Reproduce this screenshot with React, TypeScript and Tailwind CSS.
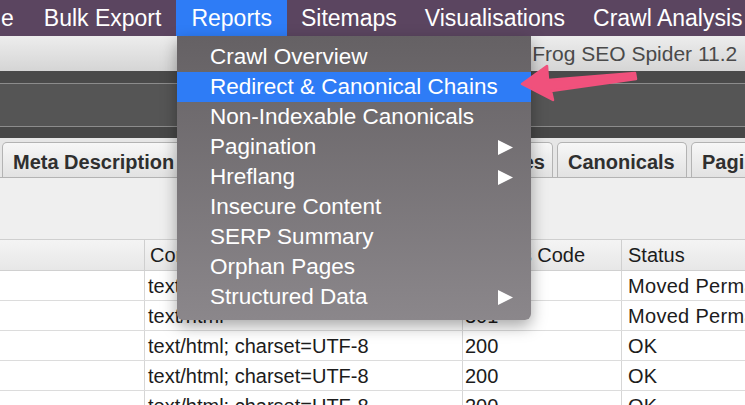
import React from 'react';

type Row = { type: string; code: string; status: string };

const rows: Row[] = [
  { type: 'text/html', code: '301', status: 'Moved Permanently' },
  { type: 'text/html', code: '301', status: 'Moved Permanently' },
  { type: 'text/html; charset=UTF-8', code: '200', status: 'OK' },
  { type: 'text/html; charset=UTF-8', code: '200', status: 'OK' },
  { type: 'text/html; charset=UTF-8', code: '200', status: 'OK' },
];

const reportItems = [
  { label: 'Crawl Overview' },
  { label: 'Redirect & Canonical Chains', active: true },
  { label: 'Non-Indexable Canonicals' },
  { label: 'Pagination', sub: true },
  { label: 'Hreflang', sub: true },
  { label: 'Insecure Content' },
  { label: 'SERP Summary' },
  { label: 'Orphan Pages' },
  { label: 'Structured Data', sub: true },
];

function SubArrow() {
  return (
    <svg width="15" height="15" viewBox="0 0 15 15" className="absolute right-[18px] top-[8px]">
      <polygon points="0,0 15,7.5 0,15" fill="#ffffff" />
    </svg>
  );
}

function ReportsMenu() {
  return (
    <div className="absolute left-[177px] top-[36px] w-[354px] h-[284px] pt-[6px] rounded-b-[6px] bg-gradient-to-b from-[#656164] to-[#8b878b] shadow-[0_6px_16px_rgba(0,0,0,0.35)] text-white text-[22.5px] z-10">
      {reportItems.map(item => (
        <div
          key={item.label}
          className={`relative h-[30px] pl-[33px] flex items-center ${item.active ? 'bg-[#2e7cf6]' : ''}`}
        >
          {item.label}
          {item.sub && <SubArrow />}
        </div>
      ))}
    </div>
  );
}

// callout arrow pointing at the highlighted report
function PinkArrow() {
  return (
    <svg width="135" height="55" viewBox="0 0 135 55" className="absolute left-[510px] top-[55px] z-20">
      <polygon
        points="12,29 37,11 38,25 125,18 126,24 41,36 43,45"
        fill="#f0517c"
        stroke="#f0517c"
        strokeWidth="2.5"
        strokeLinejoin="round"
      />
    </svg>
  );
}

function Tab({ label, w }: { label: string; w: string }) {
  return (
    <div
      className={`${w} h-[35px] shrink-0 px-[10px] pt-[3px] flex items-center border border-b-0 border-[#b3b3b3] rounded-t-[5px] bg-gradient-to-b from-[#f7f7f7] to-[#e2e2e2] font-bold text-[20px] text-[#2f2f2f] whitespace-nowrap overflow-hidden`}
    >
      {label}
    </div>
  );
}

export default function App() {
  return (
    <div className="relative w-[745px] h-[405px] overflow-hidden bg-white" style={{ fontFamily: '"Liberation Sans", Arial, sans-serif' }}>
      {/* menu bar */}
      <div className="h-[36px] bg-[#5b4560] flex text-white text-[23px] whitespace-nowrap">
        <div className="h-full flex items-center pl-[1px] pr-[15px]">e</div>
        <div className="h-full flex items-center px-[15px]">Bulk Export</div>
        <div className="h-full flex items-center px-[15px] bg-[#2e7cf6]">Reports</div>
        <div className="h-full flex items-center px-[14px]">Sitemaps</div>
        <div className="h-full flex items-center px-[14px]">Visualisations</div>
        <div className="h-full flex items-center px-[14px]">Crawl Analysis</div>
        <div className="h-full flex items-center px-[14px]">Licence</div>
      </div>

      {/* window title */}
      <div className="h-[35px] bg-gradient-to-b from-[#ededed] to-[#d5d5d5] flex items-center pl-[426px] text-[21px] text-[#4a4a4a] whitespace-nowrap">
        Screaming Frog SEO Spider 11.2
      </div>

      {/* toolbar bands */}
      <div className="h-[12px] bg-[#4a4a4a]" />
      <div className="h-[1px] bg-[#8c8c8c]" />
      <div className="h-[42px] bg-[#555555]" />
      <div className="h-[1px] bg-[#8c8c8c]" />
      <div className="h-[11px] bg-[#474747]" />

      {/* tabs */}
      <div className="h-[40px] bg-[#e6e6e6] border-b border-[#b3b3b3] flex items-end gap-[4px] pl-[2px]">
        <Tab label="Meta Description" w="w-[181px]" />
        <Tab label="Meta Keywords" w="w-[170px]" />
        <Tab label="H1" w="w-[48px]" />
        <Tab label="H2" w="w-[48px]" />
        <Tab label="Images" w="w-[88px]" />
        <Tab label="Canonicals" w="w-[130px]" />
        <Tab label="Pagination" w="w-[120px]" />
      </div>

      {/* filter area */}
      <div className="h-[62px] bg-[#efefef] border-b border-[#cfcfcf]" />

      {/* table */}
      <div className="text-[20px] text-[#1c1c1c] whitespace-nowrap">
        <div className="h-[31px] flex bg-gradient-to-b from-[#f4f4f4] to-[#e7e7e7] border-b border-[#d0d0d0]">
          <div className="w-[145px] shrink-0 border-r border-[#cfcfcf]" />
          <div className="w-[318px] shrink-0 pl-[5px] flex items-center border-r border-[#cfcfcf]">Content</div>
          <div className="w-[159px] shrink-0 pl-[12px] flex items-center border-r border-[#cfcfcf]">Status Code</div>
          <div className="flex-1 pl-[6px] flex items-center overflow-hidden">Status</div>
        </div>
        {rows.map((r, i) => (
          <div key={i} className="h-[30px] flex border-b border-[#dcdcdc]">
            <div className="w-[145px] shrink-0 border-r border-[#d6d6d6]" />
            <div className="w-[318px] shrink-0 pl-[3px] flex items-center border-r border-[#d6d6d6]">{r.type}</div>
            <div className="w-[159px] shrink-0 pl-[2px] flex items-center border-r border-[#d6d6d6]">{r.code}</div>
            <div className="flex-1 pl-[6px] flex items-center overflow-hidden tracking-[0.3px]">{r.status}</div>
          </div>
        ))}
      </div>

      <ReportsMenu />
      <PinkArrow />
    </div>
  );
}
